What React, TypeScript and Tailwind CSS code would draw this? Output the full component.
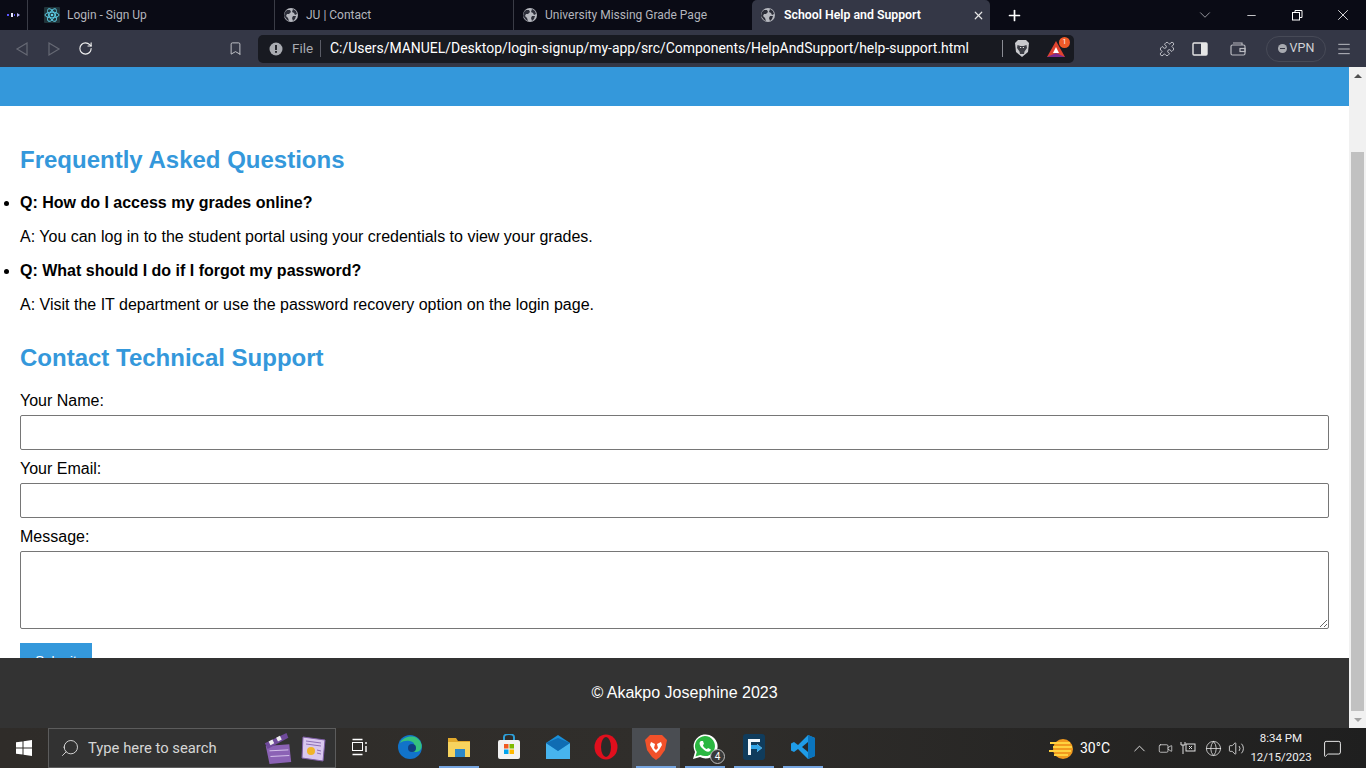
import React from "react";
import { ChevronDown, ChevronUp, Minus, X, Plus, RotateCw, Bookmark, Puzzle, Menu, Search, Globe, Volume2, MessageSquare, Video } from "lucide-react";

const ui = { fontFamily: 'Roboto, "Open Sans", sans-serif' };

function GlobeFav() {
  return (
    <svg width="16" height="16" viewBox="0 0 16 16" className="shrink-0">
      <circle cx="8" cy="8" r="7" fill="#b6b8bf" />
      <path d="M4 3l3 0 1 2-2 2-2 0-1 2 2 2 1 3-2-1-3-4 1-4zM10 2l3 2 1 3-2 1-1-2-2-1zM10 9l3 0-1 3-2 2-1-3z" fill="#2c2e39" />
    </svg>
  );
}

function ReactFav() {
  return (
    <svg width="16" height="16" viewBox="0 0 16 16" className="shrink-0">
      <rect width="16" height="16" rx="1" fill="#20343a" />
      <g fill="none" stroke="#5fd3ec" strokeWidth="0.9">
        <ellipse cx="8" cy="8" rx="7" ry="2.8" />
        <ellipse cx="8" cy="8" rx="7" ry="2.8" transform="rotate(60 8 8)" />
        <ellipse cx="8" cy="8" rx="7" ry="2.8" transform="rotate(120 8 8)" />
      </g>
      <circle cx="8" cy="8" r="1.3" fill="#5fd3ec" />
    </svg>
  );
}

function BrowserTab({ title, icon, width, pad, sep = true }: { title: string; icon: React.ReactNode; width: string; pad: string; sep?: boolean }) {
  return (
    <div className={`${width} ${pad} h-[30px] flex items-center gap-[7px] ${sep ? "border-r border-[#3a3c46]" : ""}`}>
      {icon}
      <span className="text-[12px] text-[#b4b6bd] whitespace-nowrap">{title}</span>
    </div>
  );
}

function WinSlot({ children }: { children: React.ReactNode }) {
  return <div className="w-[46px] flex justify-center">{children}</div>;
}

function Chrome() {
  return (
    <div style={ui} className="shrink-0">
      <div className="h-[30px] bg-[#0a0b15] flex items-center">
        <div className="w-[28px] h-[30px] flex items-center justify-center border-r border-[#3a3c46]">
          <svg width="14" height="6" viewBox="0 0 14 6"><rect x="0" y="2" width="2" height="2" fill="#5a55ff" /><rect x="4" y="1" width="2" height="4" fill="#e6e6ff" /><rect x="7" y="2" width="1" height="2" fill="#5a55ff" /><path d="M10 1l3 2-3 2z" fill="#b9b6ff" /></svg>
        </div>
        <BrowserTab title="Login - Sign Up" icon={<ReactFav />} width="w-[247px]" pad="pl-[16px]" />
        <BrowserTab title="JU | Contact" icon={<GlobeFav />} width="w-[239px]" pad="pl-[8px]" />
        <BrowserTab title="University Missing Grade Page" icon={<GlobeFav />} width="w-[238px]" pad="pl-[8px]" sep={false} />
        <div className="w-[238px] h-[30px] bg-[#343746] rounded-t-[5px] flex items-center pl-[8px] pr-[5px] gap-[8px]">
          <GlobeFav />
          <span className="text-[12.3px] font-semibold text-white flex-1 whitespace-nowrap">School Help and Support</span>
          <X size={13} color="#e6e6e6" strokeWidth={2.2} />
        </div>
        <div className="w-[48px] flex justify-center"><Plus size={17} color="#fff" strokeWidth={2.4} /></div>
        <div className="flex-1" />
        <div className="flex items-center">
          <WinSlot><ChevronDown size={18} color="#bfc0c6" strokeWidth={1} /></WinSlot>
          <WinSlot><Minus size={13} color="#fff" strokeWidth={1.4} /></WinSlot>
          <WinSlot><svg width="12" height="12" viewBox="0 0 12 12" fill="none" stroke="#fff" strokeWidth="1"><rect x="1.500" y="3.500" width="7" height="7.500" /><path d="M4 3.500V1.500h7v7H8.500" /></svg></WinSlot>
          <WinSlot><X size={18} color="#fff" strokeWidth={1.1} /></WinSlot>
        </div>
      </div>
      <div className="h-[37px] bg-[#343746] flex items-center">
        <div className="w-[258px] flex items-center pl-[14px] shrink-0">
          <svg width="16" height="16" viewBox="0 0 16 16" fill="none" stroke="#666974" strokeWidth="1.2"><path d="M13 2 3 8l10 6z" /></svg>
          <svg width="16" height="16" viewBox="0 0 16 16" fill="none" stroke="#666974" strokeWidth="1.2" className="ml-[16px]"><path d="M3 2l10 6-10 6z" /></svg>
          <RotateCw size={15} color="#f0f0f0" strokeWidth={1.8} className="ml-[16px]" />
          <Bookmark size={15} color="#c8c9ce" strokeWidth={1.500} className="ml-[135px]" />
        </div>
        <div className="w-[816px] h-[28px] bg-[#181a21] rounded-[5px] flex items-center pl-[11px] shrink-0">
          <svg width="14" height="14" viewBox="0 0 14 14"><circle cx="7" cy="7" r="6.500" fill="#a9abb1" /><rect x="6.100" y="3" width="1.800" height="5" fill="#181a21" /><rect x="6.100" y="9" width="1.800" height="1.800" fill="#181a21" /></svg>
          <span className="text-[13.5px] text-[#a8aab0] ml-[9px] w-[22px]">File</span>
          <div className="w-px h-[17px] bg-[#5a5c66] ml-[6px]" />
          <span className="text-[13.95px] text-white ml-[9px] w-[672px] whitespace-nowrap">C:/Users/MANUEL/Desktop/login-signup/my-app/src/Components/HelpAndSupport/help-support.html</span>
          <div className="w-px h-[17px] bg-[#8a8c94]" />
          <svg width="16" height="19" viewBox="0 0 16 19" className="ml-[11px]"><path d="M4 1h8l3 3-1 9-6 5-6-5-1-9z" fill="#c9cace" /><path d="M3.500 6l3 1 1.500 0 1.500 0 3-1 .5 3-2.500 3.500-.5 2.500H6l-.5-2.500L3 9z" fill="#3b3d45" /><path d="M6 8h1.200v1H6zM8.800 8H10v1H8.800z" fill="#e0e0e0" /></svg>
          <div className="relative ml-[17px] w-[18px] h-[16px]">
            <svg width="18" height="16" viewBox="0 0 18 16"><path d="M9 0l9 16H0z" fill="#e0432f" /><path d="M0 16l9-4 9 4z" fill="#7c2b8f" /><path d="M9 6l3 6H6z" fill="#fff" /></svg>
            <span className="absolute -top-[4px] -right-[5px] w-[11px] h-[11px] rounded-full bg-[#f05a28] text-white text-[7px] leading-[11px] text-center">1</span>
          </div>
        </div>
        <div className="flex items-center flex-1 pl-[85px]">
          <Puzzle size={16} color="#d0d1d6" strokeWidth={1.300} />
          <svg width="16" height="14" viewBox="0 0 16 14" className="ml-[17px]"><rect x="1" y="1" width="14" height="12" rx="1" fill="none" stroke="#e6e6e6" strokeWidth="1.400" /><rect x="9" y="1" width="6" height="12" fill="#e6e6e6" /></svg>
          <svg width="16" height="14" viewBox="0 0 16 14" fill="none" stroke="#b9bac0" strokeWidth="1.200" className="ml-[22px]"><path d="M3 1h9v2" /><rect x="1" y="3" width="14" height="10" rx="1.500" /><rect x="10" y="6.500" width="5" height="3" /></svg>
          <div className="ml-[20px] w-[60px] h-[26px] rounded-full border border-[#474a57] flex items-center justify-center gap-[3px]">
            <div className="w-[9px] h-[9px] rounded-full bg-[#a8aab0] flex items-center justify-center"><div className="w-[5px] h-px bg-[#343746]" /></div>
            <span className="text-[12.5px] text-[#d0d1d6]">VPN</span>
          </div>
          <Menu size={16} color="#d0d1d6" strokeWidth={1.300} className="ml-[10px]" />
        </div>
      </div>
    </div>
  );
}

function Scrollbar() {
  return (
    <div className="w-[17px] shrink-0 bg-[#f1f1f1] flex flex-col items-center">
      <div className="h-[17px] flex items-center justify-center"><div className="w-0 h-0 border-x-[4px] border-x-transparent border-b-[4px] border-b-[#505050]" /></div>
      <div className="h-[68px]" />
      <div className="w-[13px] flex-1 bg-[#c1c1c1]" />
      <div className="h-[17px] flex items-center justify-center"><div className="w-0 h-0 border-x-[4px] border-x-transparent border-t-[4px] border-t-[#a3a3a3]" /></div>
    </div>
  );
}

function Page() {
  const field = "block w-full h-[35px] border border-[#767676] rounded-[2px] bg-white";
  const head = "text-[24px] leading-[27.5px] font-bold text-[#3498db]";
  return (
    <div className="flex-1 flex min-h-0">
      <div className="flex-1 flex flex-col min-w-0" style={{ fontFamily: '"Liberation Sans", Arial, sans-serif' }}>
        <div className="h-[39px] shrink-0 bg-[#3498db]" />
        <div className="flex-1 min-h-0 overflow-hidden px-[20px] pt-[40px] bg-white text-[16px] leading-[18px] text-black">
          <h2 className={head}>Frequently Asked Questions</h2>
          <ul className="list-disc mt-[20px]">
            <li>
              <strong className="font-bold">Q: How do I access my grades online?</strong>
              <p className="mt-[16px]">A: You can log in to the student portal using your credentials to view your grades.</p>
            </li>
            <li className="mt-[16px]">
              <strong className="font-bold">Q: What should I do if I forgot my password?</strong>
              <p className="mt-[16px]">A: Visit the IT department or use the password recovery option on the login page.</p>
            </li>
          </ul>
          <h2 className={`${head} mt-[30.5px]`}>Contact Technical Support</h2>
          <form className="mt-[20px]">
            <label className="block mb-[5.5px]">Your Name:</label>
            <input className={field} />
            <label className="block mt-[9.5px] mb-[5.5px]">Your Email:</label>
            <input className={field} />
            <label className="block mt-[9.5px] mb-[5.5px]">Message:</label>
            <textarea className="block w-full h-[78px] border border-[#767676] rounded-[2px] bg-white" />
            <button type="button" className="block mt-[14px] w-[72px] h-[35px] bg-[#3498db] text-white text-[13.33px] leading-[15px]">Submit</button>
          </form>
        </div>
        <div className="h-[70px] shrink-0 bg-[#333333] flex items-center justify-center pl-[20px] text-white text-[16px]">© Akakpo Josephine 2023</div>
      </div>
      <Scrollbar />
    </div>
  );
}

function TaskSlot({ children, width, mark, active }: { children: React.ReactNode; width: string; mark?: boolean; active?: boolean }) {
  return (
    <div className={`${width} h-[40px] shrink-0 flex flex-col items-center ${active ? "bg-[#4a4d52]" : ""}`}>
      <div className="flex-1 flex items-center justify-center">{children}</div>
      <div className={`h-[2px] ${mark ? "w-[40px] bg-[#76a5e0]" : ""}`} />
    </div>
  );
}

function Taskbar() {
  return (
    <div style={ui} className="h-[40px] shrink-0 bg-gradient-to-r from-[#2f2c29] via-[#302e2b] to-[#1f1f1f] flex items-center text-white">
      <div className="w-[48px] shrink-0 flex justify-center">
        <svg width="16" height="16" viewBox="0 0 16 16" fill="#fff"><path d="M0 2.300 6.500 1.400v6.100H0zM7.500 1.200 16 0v7.500H7.500zM0 8.500h6.500v6.100L0 13.700zM7.500 8.500H16V16l-8.500-1.200z" /></svg>
      </div>
      <div className="w-[288px] h-[40px] shrink-0 bg-[#323232] border border-[#5c5c5c] flex items-center pl-[11px]">
        <Search size={20} color="#e0e0e0" strokeWidth={1.1} className="-scale-x-100" />
        <span className="text-[14.8px] text-[#d6d6d6] ml-[8px] flex-1">Type here to search</span>
        <svg width="32" height="34" viewBox="0 0 34 34">
          <path d="M4 15l25-2 2 19-23 2z" fill="#8b62b5" />
          <path d="M3 12 26 1l2 5L6 18z" fill="#6f4a9b" />
          <path d="M7 10l4-2 2 4-4 2zM15 6l4-2 2 4-4 2z" fill="#eee" />
          <path d="M8 20l20-1M9 26l20-1" stroke="#d9c6ee" strokeWidth="1" />
        </svg>
        <svg width="28" height="28" viewBox="0 0 28 28" className="ml-[6px] mr-[7px]">
          <path d="M3 3l22 3-2 21-21-3z" fill="#d9c7ee" stroke="#7f5fa8" />
          <path d="M6 7l15 2M6 10l15 2" stroke="#8d6fb5" />
          <circle cx="11" cy="17" r="4" fill="#f0b429" />
          <path d="M17 16l4 1M17 19l4 1" stroke="#8d6fb5" />
        </svg>
      </div>
      <TaskSlot width="w-[48px]">
        <svg width="18" height="18" viewBox="0 0 18 18" fill="none" stroke="#fff" strokeWidth="1"><rect x="1.500" y="4.500" width="10" height="8" /><path d="M1.500 1.500h10M1.500 16.500h10M15 4v2M15 8v6" strokeWidth="1.400" /></svg>
      </TaskSlot>
      <TaskSlot width="w-[52px]">
        <svg width="26" height="26" viewBox="0 0 26 26">
          <circle cx="13" cy="13" r="12" fill="#1173c9" />
          <path d="M3 9C6 2 20-1 24 9c2 5-1 9-5 9-3 0-6-1-6-3 0-3 4-2 4-5 0-3-9-5-14-1z" fill="#35c27e" />
          <circle cx="15" cy="14" r="4" fill="#0f3f80" />
        </svg>
      </TaskSlot>
      <TaskSlot width="w-[46px]" mark>
        <svg width="24" height="22" viewBox="0 0 24 22"><path d="M1 2h8l2 3h12v4H1z" fill="#e2a92c" /><rect x="1" y="6" width="22" height="15" fill="#f7d35e" /><rect x="8" y="13" width="10" height="8" fill="#2b88c9" /></svg>
      </TaskSlot>
      <TaskSlot width="w-[54px]">
        <svg width="24" height="26" viewBox="0 0 24 26"><path d="M7 7V3a5 3 0 0 1 10 0v4" fill="none" stroke="#2d9fd8" strokeWidth="2" /><rect x="1" y="6" width="22" height="19" rx="2" fill="#f2f2f2" /><rect x="7" y="10" width="4.500" height="4.500" fill="#f05a22" /><rect x="12.500" y="10" width="4.500" height="4.500" fill="#7fba00" /><rect x="7" y="15.500" width="4.500" height="4.500" fill="#00a4ef" /><rect x="12.500" y="15.500" width="4.500" height="4.500" fill="#ffb900" /></svg>
      </TaskSlot>
      <TaskSlot width="w-[44px]">
        <svg width="24" height="24" viewBox="0 0 24 24"><path d="M0 8 12 0l12 8v16H0z" fill="#1a8fd8" /><path d="M0 8l12 8 12-8v16H0z" fill="#47b4ee" /><path d="M0 8l12 8 12-8-12-5z" fill="#0f6cb3" /></svg>
      </TaskSlot>
      <TaskSlot width="w-[52px]">
        <svg width="24" height="26" viewBox="0 0 24 26"><ellipse cx="12" cy="13" rx="11.500" ry="12.500" fill="#e00f1d" /><ellipse cx="12" cy="13" rx="5" ry="10" fill="#2c2a28" /></svg>
      </TaskSlot>
      <TaskSlot width="w-[48px]" active mark>
        <svg width="22" height="26" viewBox="0 0 22 26"><path d="M5 1h12l3 3 2 2-2 10-5 7-4 3-4-3-5-7L0 6l2-2z" fill="#f1512a" /><path d="M6 8l4 2-1 4 2 2 2-2-1-4 4-2 1 3-3 5-3 3-3-3-3-5z" fill="#fff" /></svg>
      </TaskSlot>
      <TaskSlot width="w-[50px]" mark>
        <div className="relative w-[26px] h-[26px]">
          <svg width="26" height="26" viewBox="0 0 26 26"><path d="M1 25l2-7A12 12 0 1 1 8 23z" fill="#fff" /><path d="M3.500 22.500l1.300-4.600A10 10 0 1 1 8.400 21z" fill="#2bb741" /><path d="M9 7c-2 1-2 4 1 7s6 5 8 3c1-1 1-2 0-2l-2-1-1 1c-1 0-4-2-4-4l1-1-1-3z" fill="#fff" /></svg>
          <span className="absolute -bottom-[4px] -right-[7px] w-[15px] h-[15px] rounded-full bg-[#3a3a3a] border border-[#bcbcbc] text-[10px] leading-[13px] text-center text-white">4</span>
        </div>
      </TaskSlot>
      <TaskSlot width="w-[48px]" mark>
        <svg width="24" height="26" viewBox="0 0 24 26"><rect x="1" y="0" width="22" height="26" rx="3" fill="#103c5c" /><path d="M6 5h12v3H9v3h6v-1l5 4-5 4v-3H9v6H6z" fill="#f2f8fc" /><path d="M9 11h6v-1l5 4-5 4v-3H9z" fill="#32a5e6" /></svg>
      </TaskSlot>
      <TaskSlot width="w-[50px]" mark>
        <svg width="24" height="24" viewBox="0 0 24 24"><path d="M17 0 7 10 3 7 0 8.500v7L3 17l4-3 10 10 7-3V3z" fill="#1f9ce8" /><path d="M17 7v10l-6-5z" fill="#26282b" /><path d="M17 0l7 3v18l-7 3z" fill="#0a74bd" /></svg>
      </TaskSlot>
      <div className="flex-1" />
      <svg width="26" height="24" viewBox="0 0 26 24" className="shrink-0"><circle cx="15" cy="13" r="10" fill="#f19a1f" /><path d="M2 7h20M5 11h19M1 15h22M6 19h14" stroke="#ffd23f" strokeWidth="2" /></svg>
      <span className="text-[14px] ml-[6px] w-[47px]">30°C</span>
      <ChevronUp size={19} color="#e6e6e6" strokeWidth={1.200} className="ml-[3px]" />
      <Video size={15} color="#e0e0e0" strokeWidth={1.200} className="ml-[9px]" />
      <svg width="16" height="14" viewBox="0 0 16 14" fill="none" stroke="#e0e0e0" strokeWidth="1" className="ml-[7px]"><path d="M1 1v3h4V1M3 4v9" /><rect x="6" y="3" width="9" height="7" /><path d="M9 5l3 3M12 5l-3 3" /></svg>
      <Globe size={17} color="#e6e6e6" strokeWidth={1.100} className="ml-[9px]" />
      <Volume2 size={17} color="#e6e6e6" strokeWidth={1.200} className="ml-[6px]" />
      <div className="w-[60px] ml-[6px] flex flex-col items-center text-[11.5px] leading-[19px] text-[#f0f0f0]">
        <span className="whitespace-nowrap">8:34 PM</span>
        <span className="whitespace-nowrap">12/15/2023</span>
      </div>
      <div className="w-[55px] flex justify-center pr-[13px]"><MessageSquare size={19} color="#f0f0f0" strokeWidth={1.200} /></div>
    </div>
  );
}

export default function App() {
  return (
    <div className="w-[1366px] h-[768px] overflow-hidden flex flex-col">
      <Chrome />
      <Page />
      <Taskbar />
    </div>
  );
}
